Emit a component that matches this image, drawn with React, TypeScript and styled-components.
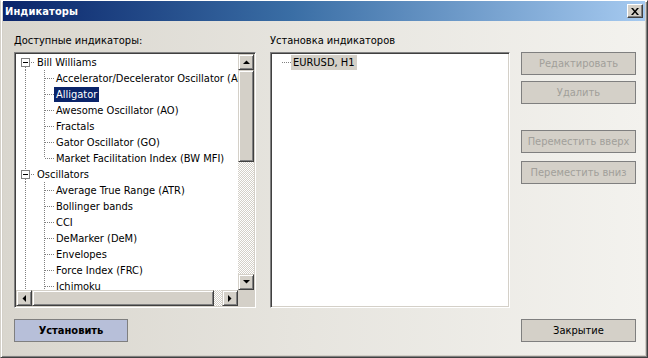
import React from "react";
import styled, { createGlobalStyle } from "styled-components";

const Global = createGlobalStyle`
  html, body { margin: 0; padding: 0; background: #d4d0c8; }
  body { width: 648px; height: 358px; overflow: hidden; }
  * { box-sizing: border-box; }
`;

const FONT = `"DejaVu Sans Condensed", "DejaVu Sans", "Liberation Sans", sans-serif`;

const Window = styled.div`
  width: 648px;
  height: 358px;
  display: flex;
  flex-direction: column;
  font-family: ${FONT};
  font-size: 11px;
  color: #000;
  background: #d4d0c8;
  border-top: 1px solid #ffffff;
  border-left: 1px solid #d4d0c8;
  border-right: 1px solid #404040;
  border-bottom: 1px solid #404040;
  box-shadow: inset 1px 1px 0 #ffffff, inset -1px -1px 0 #808080;
  padding: 0 2px 2px 2px;
`;

const TitleBar = styled.div`
  height: 20px;
  flex: none;
  display: flex;
  align-items: center;
  justify-content: space-between;
  padding: 0 2px 0 2px;
  background: linear-gradient(to right, #0a246a 0%, #3a6ea5 45%, #a6caf0 100%);
`;

const Title = styled.span`
  color: #fff;
  font-weight: bold;
  font-size: 11px;
  letter-spacing: 0.1px;
`;

const CloseButton = styled.div`
  width: 16px;
  height: 14px;
  background: #d4d0c8;
  border-top: 1px solid #ffffff;
  border-left: 1px solid #ffffff;
  border-right: 1px solid #404040;
  border-bottom: 1px solid #404040;
  box-shadow: inset -1px -1px 0 #808080;
  display: flex;
  align-items: center;
  justify-content: center;
`;

const Body = styled.div`
  flex: 1;
  display: flex;
  flex-direction: column;
  padding: 13px 0 0 11px;
  background: linear-gradient(to right, #d9d6ce 0%, #e6e4de 45%, #f3f2ee 100%);
`;

const Columns = styled.div`
  display: flex;
  align-items: flex-start;
`;

const Column = styled.div<{ $width: number; $after: number }>`
  width: ${(p) => p.$width}px;
  margin-right: ${(p) => p.$after}px;
  display: flex;
  flex-direction: column;
`;

const Label = styled.div`
  height: 13px;
  line-height: 13px;
  margin-bottom: 5px;
  white-space: nowrap;
`;

const SunkenBox = styled.div`
  height: 256px;
  background: #fff;
  border-top: 1px solid #808080;
  border-left: 1px solid #808080;
  border-right: 1px solid #ffffff;
  border-bottom: 1px solid #ffffff;
  box-shadow: inset 1px 1px 0 #404040, inset -1px -1px 0 #d4d0c8;
  padding: 1px;
`;

const TreeGrid = styled.div`
  height: 100%;
  display: grid;
  grid-template-columns: 1fr 16px;
  grid-template-rows: 1fr 16px;
`;

const Viewport = styled.div`
  overflow: hidden;
  position: relative;
`;

const RowsList = styled.div`
  display: flex;
  flex-direction: column;
  width: 300px;
`;

const Row = styled.div`
  height: 16px;
  display: flex;
  align-items: center;
  white-space: nowrap;
`;

const Gutter = styled.svg<{ $w: number }>`
  width: ${(p) => p.$w}px;
  height: 16px;
  flex: none;
  display: block;
`;

const ItemText = styled.span<{ $sel?: "focus" | "blur" }>`
  height: 15px;
  line-height: 15px;
  padding: 0 2px 0 2px;
  background: ${(p) => (p.$sel === "focus" ? "#0a246a" : p.$sel === "blur" ? "#d4d0c8" : "transparent")};
  color: ${(p) => (p.$sel === "focus" ? "#fff" : "#000")};
`;

const raised = `
  background: #d4d0c8;
  border-top: 1px solid #d4d0c8;
  border-left: 1px solid #d4d0c8;
  border-right: 1px solid #404040;
  border-bottom: 1px solid #404040;
  box-shadow: inset 1px 1px 0 #ffffff, inset -1px -1px 0 #808080;
`;

const ScrollV = styled.div`
  display: flex;
  flex-direction: column;
`;

const ScrollH = styled.div`
  display: flex;
`;

const ArrowBtn = styled.div`
  ${raised}
  width: 16px;
  height: 16px;
  flex: none;
  display: flex;
  align-items: center;
  justify-content: center;
`;

const Thumb = styled.div<{ $len: number; $vertical?: boolean }>`
  ${raised}
  flex: none;
  ${(p) => (p.$vertical ? `height: ${p.$len}px;` : `width: ${p.$len}px;`)}
`;

const Track = styled.div`
  flex: 1;
  background: repeating-conic-gradient(#d4d0c8 0 25%, #ffffff 0 50%) 0 0 / 2px 2px;
`;

const Corner = styled.div`
  background: #d4d0c8;
`;

const ButtonCol = styled.div`
  width: 115px;
  display: flex;
  flex-direction: column;
  padding-top: 18px;
`;

const Button = styled.div<{ $variant?: "disabled" | "default" | "primary"; $mt?: number }>`
  width: ${(p) => (p.$variant === "primary" ? 114 : 115)}px;
  height: 23px;
  margin-top: ${(p) => p.$mt ?? 0}px;
  display: flex;
  align-items: center;
  justify-content: center;
  border: 1px solid #7f7f7f;
  background: ${(p) => (p.$variant === "primary" ? "#b7bfd9" : "#d4d0c8")};
  color: ${(p) => (p.$variant === "disabled" ? "#a19f9a" : "#000")};
  font-weight: ${(p) => (p.$variant === "primary" ? "bold" : "normal")};
  white-space: nowrap;
`;

const Footer = styled.div`
  width: 622px;
  margin-top: 11px;
  display: flex;
  justify-content: space-between;
`;

type GutterKind = "pipe" | "tee" | "elbow" | "openFirst" | "openMid" | "dash" | "none";

const DOT = { stroke: "#808080", strokeWidth: 1, strokeDasharray: "1 1", shapeRendering: "crispEdges" as const };

function GutterCell({ kind, w = 19 }: { kind: GutterKind; w?: number }) {
  const cx = 9.5;
  return (
    <Gutter $w={w} viewBox={`0 0 ${w} 16`}>
      {(kind === "pipe" || kind === "tee") && <line x1={cx} y1={0} x2={cx} y2={16} {...DOT} />}
      {kind === "elbow" && <line x1={cx} y1={0} x2={cx} y2={8} {...DOT} />}
      {(kind === "tee" || kind === "elbow" || kind === "dash") && (
        <line x1={10} y1={8.5} x2={w} y2={8.5} {...DOT} />
      )}
      {(kind === "openFirst" || kind === "openMid") && (
        <g>
          {kind === "openMid" && <line x1={cx} y1={0} x2={cx} y2={4} {...DOT} />}
          <line x1={cx} y1={13} x2={cx} y2={16} {...DOT} />
          <line x1={15} y1={8.5} x2={w} y2={8.5} {...DOT} />
          <rect x={5.5} y={4.5} width={8} height={8} fill="#fff" stroke="#808080" shapeRendering="crispEdges" />
          <line x1={7} y1={8.5} x2={12} y2={8.5} stroke="#000" shapeRendering="crispEdges" />
        </g>
      )}
    </Gutter>
  );
}

type Item = { text: string; gutters: GutterKind[]; sel?: "focus" | "blur" };

const bill = [
  "Accelerator/Decelerator Oscillator (AC)",
  "Alligator",
  "Awesome Oscillator (AO)",
  "Fractals",
  "Gator Oscillator (GO)",
  "Market Facilitation Index (BW MFI)",
];
const osc = [
  "Average True Range (ATR)",
  "Bollinger bands",
  "CCI",
  "DeMarker (DeM)",
  "Envelopes",
  "Force Index (FRC)",
  "Ichimoku",
];

const items: Item[] = [
  { text: "Bill Williams", gutters: ["openFirst"] },
  ...bill.map((t, i) => ({
    text: t,
    gutters: ["pipe", i === bill.length - 1 ? "elbow" : "tee"] as GutterKind[],
    sel: t === "Alligator" ? ("focus" as const) : undefined,
  })),
  { text: "Oscillators", gutters: ["openMid"] },
  ...osc.map((t) => ({ text: t, gutters: ["pipe", "tee"] as GutterKind[] })),
];

function Tree({ rows }: { rows: Item[] }) {
  return (
    <RowsList>
      {rows.map((r, i) => (
        <Row key={i}>
          {r.gutters.map((g, j) => (
            <GutterCell key={j} kind={g} />
          ))}
          <ItemText $sel={r.sel}>{r.text}</ItemText>
        </Row>
      ))}
    </RowsList>
  );
}

function Arrow({ dir }: { dir: "up" | "down" | "left" | "right" }) {
  const pts =
    dir === "up"
      ? "0,4 7,4 3.5,0.5"
      : dir === "down"
      ? "0,0 7,0 3.5,3.5"
      : dir === "left"
      ? "4,0 4,7 0.5,3.5"
      : "0,0 0,7 3.5,3.5";
  const vertical = dir === "up" || dir === "down";
  return (
    <svg width={vertical ? 7 : 4} height={vertical ? 4 : 7} viewBox={vertical ? "0 0 7 4" : "0 0 4 7"}>
      <polygon points={pts} fill="#000" />
    </svg>
  );
}

export default function App() {
  return (
    <>
      <Global />
      <Window>
        <TitleBar>
          <Title>Индикаторы</Title>
          <CloseButton>
            <svg width="8" height="7" viewBox="0 0 8 7">
              <path d="M0 0h2l2 2.5 2-2.5h2L5 3.5 8 7H6L4 4.5 2 7H0l3-3.5z" fill="#000" />
            </svg>
          </CloseButton>
        </TitleBar>
        <Body>
          <Columns>
            <Column $width={242} $after={14}>
              <Label>Доступные индикаторы:</Label>
              <SunkenBox>
                <TreeGrid>
                  <Viewport>
                    <Tree rows={items} />
                  </Viewport>
                  <ScrollV>
                    <ArrowBtn>
                      <Arrow dir="up" />
                    </ArrowBtn>
                    <Thumb $vertical $len={92} />
                    <Track />
                    <ArrowBtn>
                      <Arrow dir="down" />
                    </ArrowBtn>
                  </ScrollV>
                  <ScrollH>
                    <ArrowBtn>
                      <Arrow dir="left" />
                    </ArrowBtn>
                    <Thumb $len={182} />
                    <Track />
                    <ArrowBtn>
                      <Arrow dir="right" />
                    </ArrowBtn>
                  </ScrollH>
                  <Corner />
                </TreeGrid>
              </SunkenBox>
            </Column>
            <Column $width={240} $after={11}>
              <Label>Установка индикаторов</Label>
              <SunkenBox>
                <Viewport>
                  <Tree rows={[{ text: "EURUSD, H1", gutters: ["dash"], sel: "blur" }]} />
                </Viewport>
              </SunkenBox>
            </Column>
            <ButtonCol>
              <Button $variant="disabled">Редактировать</Button>
              <Button $variant="disabled" $mt={6}>
                Удалить
              </Button>
              <Button $variant="disabled" $mt={26}>
                Переместить вверх
              </Button>
              <Button $variant="disabled" $mt={8}>
                Переместить вниз
              </Button>
            </ButtonCol>
          </Columns>
          <Footer>
            <Button $variant="primary">Установить</Button>
            <Button $variant="default">Закрытие</Button>
          </Footer>
        </Body>
      </Window>
    </>
  );
}
